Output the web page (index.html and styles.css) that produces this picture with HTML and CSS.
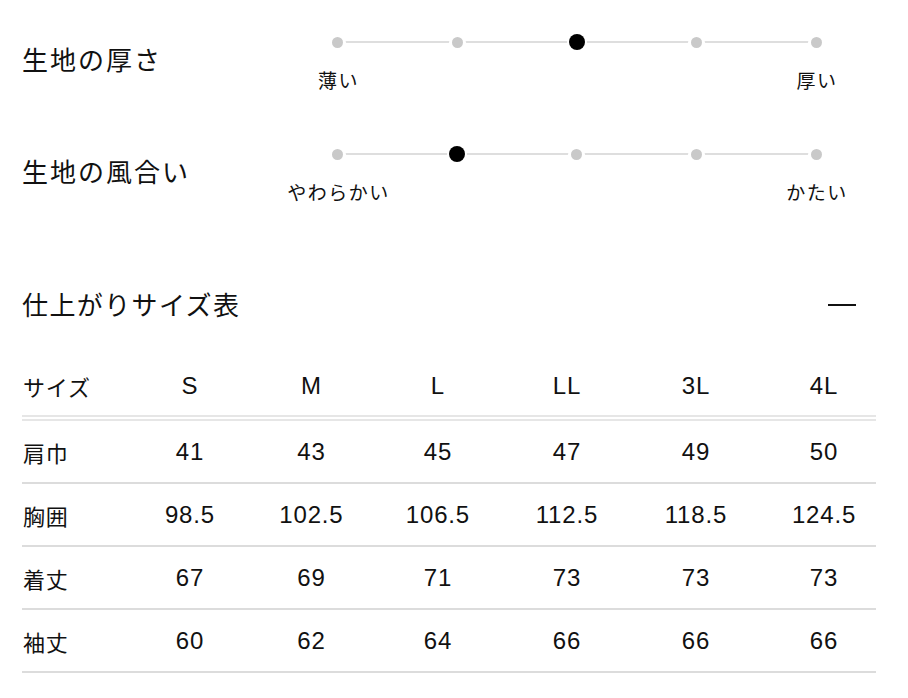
FILE: index.html
```html
<!DOCTYPE html>
<html lang="ja">
<head>
<meta charset="utf-8">
<title>生地・サイズ</title>
<link rel="stylesheet" href="styles.css">
</head>
<body>
<main class="page">
  <section class="fabric">
    <div class="fabric-row">
      <h2 class="fabric-title">生地の厚さ</h2>
      <div class="scale">
        <div class="stop"><span class="dot-wrap"><span class="dot"></span></span><span class="label">薄い</span></div>
        <div class="stop"><span class="dot-wrap"><span class="dot"></span></span></div>
        <div class="stop"><span class="dot-wrap"><span class="dot on"></span></span></div>
        <div class="stop"><span class="dot-wrap"><span class="dot"></span></span></div>
        <div class="stop"><span class="dot-wrap"><span class="dot"></span></span><span class="label">厚い</span></div>
      </div>
    </div>
    <div class="fabric-row">
      <h2 class="fabric-title">生地の風合い</h2>
      <div class="scale">
        <div class="stop"><span class="dot-wrap"><span class="dot"></span></span><span class="label">やわらかい</span></div>
        <div class="stop"><span class="dot-wrap"><span class="dot on"></span></span></div>
        <div class="stop"><span class="dot-wrap"><span class="dot"></span></span></div>
        <div class="stop"><span class="dot-wrap"><span class="dot"></span></span></div>
        <div class="stop"><span class="dot-wrap"><span class="dot"></span></span><span class="label">かたい</span></div>
      </div>
    </div>
  </section>

  <section class="sizes">
    <div class="sizes-head">
      <h2 class="sizes-title">仕上がりサイズ表</h2>
      <span class="collapse" aria-label="閉じる"></span>
    </div>
    <div class="size-table">
      <div class="size-row head">
        <span class="name">サイズ</span><span class="val">S</span><span class="val">M</span><span class="val">L</span><span class="val">LL</span><span class="val">3L</span><span class="val last">4L</span>
      </div>
      <div class="size-row">
        <span class="name">肩巾</span><span class="val">41</span><span class="val">43</span><span class="val">45</span><span class="val">47</span><span class="val">49</span><span class="val last">50</span>
      </div>
      <div class="size-row">
        <span class="name">胸囲</span><span class="val">98.5</span><span class="val">102.5</span><span class="val">106.5</span><span class="val">112.5</span><span class="val">118.5</span><span class="val last">124.5</span>
      </div>
      <div class="size-row">
        <span class="name">着丈</span><span class="val">67</span><span class="val">69</span><span class="val">71</span><span class="val">73</span><span class="val">73</span><span class="val last">73</span>
      </div>
      <div class="size-row">
        <span class="name">袖丈</span><span class="val">60</span><span class="val">62</span><span class="val">64</span><span class="val">66</span><span class="val">66</span><span class="val last">66</span>
      </div>
    </div>
  </section>
</main>
</body>
</html>
```

FILE: styles.css
```css
* { box-sizing: border-box; }
html, body { margin: 0; padding: 0; background: #fff; }
body {
  font-family: "Noto Sans CJK JP", "Noto Sans", sans-serif;
  color: #111;
}
.page {
  width: 908px;
  padding: 34px 32px 0 22px;
}
h2 { margin: 0; font-weight: 400; }

/* fabric sliders */
.fabric-row {
  display: grid;
  grid-template-columns: 256px 598px;
  height: 112px;
  align-items: start;
}
.fabric-title {
  font-size: 26px;
  line-height: 36px;
  letter-spacing: 2px;
  margin-top: 7px;
}
.scale {
  position: relative;
  display: grid;
  grid-template-columns: repeat(5, 1fr);
}
.scale::before {
  content: "";
  position: absolute;
  left: 10%;
  right: 10%;
  top: 7px;
  height: 2px;
  background: #dedede;
}
.stop {
  display: flex;
  flex-direction: column;
  align-items: center;
}
.dot-wrap {
  height: 16px;
  display: flex;
  align-items: center;
  justify-content: center;
}
.dot {
  position: relative;
  width: 11px;
  height: 11px;
  border-radius: 50%;
  background: #c9c9c9;
  box-shadow: 0 0 0 3px #fff;
}
.dot.on {
  width: 16px;
  height: 16px;
  background: #000;
  box-shadow: 0 0 0 2px #fff;
}
.label {
  margin-top: 17px;
  font-size: 19px;
  line-height: 26px;
  letter-spacing: 1.5px;
  padding-left: 1.5px;
  white-space: nowrap;
}

/* size table */
.sizes-head {
  margin-top: 28px;
  display: flex;
  justify-content: space-between;
  align-items: center;
  padding-right: 20px;
}
.sizes-title {
  font-size: 26px;
  line-height: 36px;
  letter-spacing: 1.4px;
}
.collapse {
  width: 28px;
  height: 2px;
  background: #111;
  margin-top: 2px;
}
.size-table {
  margin-top: 34px;
  width: 854px;
}
.size-row {
  display: grid;
  grid-template-columns: 108px 119px 124px 129px 129px 129px 116px;
  align-items: center;
  height: 63px;
  border-bottom: 2px solid #dcdcdc;
  font-family: "Liberation Sans", "Noto Sans CJK JP", sans-serif;
  font-size: 24px;
  line-height: 30px;
}
.size-row.head {
  height: 65px;
  border-bottom: 6px double #e6e6e6;
}
.name {
  font-family: "Noto Sans CJK JP", sans-serif;
  font-size: 22px;
  letter-spacing: 0.8px;
  padding-left: 1px;
}
.val {
  text-align: center;
  letter-spacing: 0.8px;
  padding-left: 0.8px;
}
.val.last { padding-left: 12px; }
```
